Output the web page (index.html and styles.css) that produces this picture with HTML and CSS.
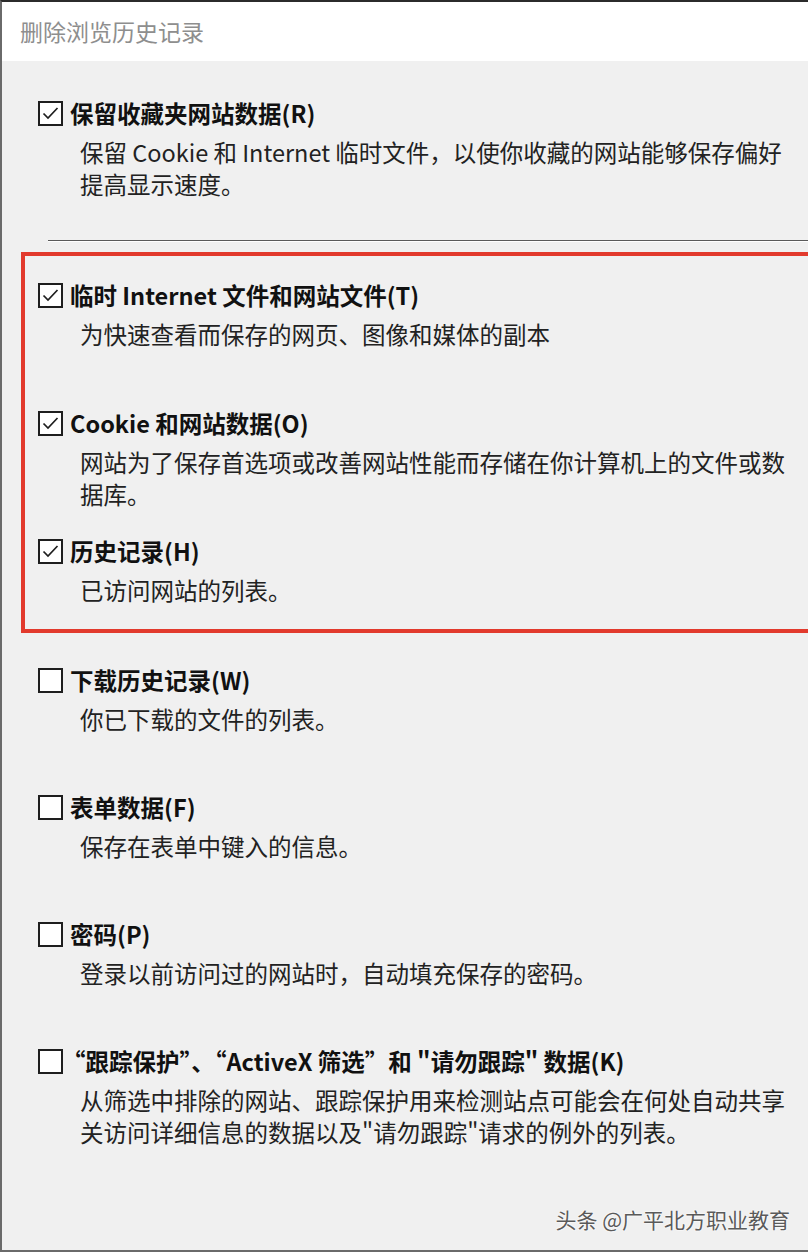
FILE: index.html
```html
<!DOCTYPE html>
<html lang="zh-CN">
<head>
    <meta charset="UTF-8">
    <meta name="viewport" content="width=device-width, initial-scale=1.0">
    <link rel="stylesheet" href="styles.css">
    <title>删除浏览历史记录</title>
</head>
<body>
<div class="dialog">
    <div class="dialog-title">删除浏览历史记录</div>

    <div class="dialog-body">
        <!-- keep favorites -->
        <div class="option option-top">
            <div class="option-head">
                <span class="check checked"><svg viewBox="0 0 21 21"><polyline points="3.5,10.5 8,15 17.5,5"/></svg></span>
                <span class="option-name">保留收藏夹网站数据(R)</span>
            </div>
            <div class="option-desc">保留 Cookie 和 Internet 临时文件，以使你收藏的网站能够保存偏好<br>提高显示速度。</div>
        </div>

        <div class="divider"></div>

        <!-- the ones that get cleared -->
        <div class="highlight">
            <div class="option">
                <div class="option-head">
                    <span class="check checked"><svg viewBox="0 0 21 21"><polyline points="3.5,10.5 8,15 17.5,5"/></svg></span>
                    <span class="option-name">临时 Internet 文件和网站文件(T)</span>
                </div>
                <div class="option-desc">为快速查看而保存的网页、图像和媒体的副本</div>
            </div>
            <div class="option">
                <div class="option-head">
                    <span class="check checked"><svg viewBox="0 0 21 21"><polyline points="3.5,10.5 8,15 17.5,5"/></svg></span>
                    <span class="option-name">Cookie 和网站数据(O)</span>
                </div>
                <div class="option-desc">网站为了保存首选项或改善网站性能而存储在你计算机上的文件或数<br>据库。</div>
            </div>
            <div class="option">
                <div class="option-head">
                    <span class="check checked"><svg viewBox="0 0 21 21"><polyline points="3.5,10.5 8,15 17.5,5"/></svg></span>
                    <span class="option-name">历史记录(H)</span>
                </div>
                <div class="option-desc">已访问网站的列表。</div>
            </div>
        </div>

        <div class="rest">
            <div class="option">
                <div class="option-head">
                    <span class="check"></span>
                    <span class="option-name">下载历史记录(W)</span>
                </div>
                <div class="option-desc">你已下载的文件的列表。</div>
            </div>
            <div class="option">
                <div class="option-head">
                    <span class="check"></span>
                    <span class="option-name">表单数据(F)</span>
                </div>
                <div class="option-desc">保存在表单中键入的信息。</div>
            </div>
            <div class="option">
                <div class="option-head">
                    <span class="check"></span>
                    <span class="option-name">密码(P)</span>
                </div>
                <div class="option-desc">登录以前访问过的网站时，自动填充保存的密码。</div>
            </div>
            <div class="option">
                <div class="option-head">
                    <span class="check"></span>
                    <span class="option-name"><span class="lead-quote">“</span>跟踪保护”、“ActiveX 筛选”和 "请勿跟踪" 数据(K)</span>
                </div>
                <div class="option-desc">从筛选中排除的网站、跟踪保护用来检测站点可能会在何处自动共享<br>关访问详细信息的数据以及"请勿跟踪"请求的例外的列表。</div>
            </div>
        </div>
    </div>

    <div class="watermark">头条 @广平北方职业教育</div>
</div>
</body>
</html>
```

FILE: styles.css
```css
body {
    margin: 0;
    padding: 0;
    background-color: #f0f0f0;
    font-family: "Noto Sans CJK SC", "Noto Sans", sans-serif;
    overflow: hidden;
}

.dialog {
    position: relative;
    width: 808px;
    height: 1252px;
    box-sizing: border-box;
    border-top: 2px solid #2b2b2b;
    border-left: 2px solid #6a6a6a;
    border-bottom: 2px solid #6a6a6a;
    background-color: #f0f0f0;
    overflow: hidden;
}

.dialog-title {
    height: 59px;
    background-color: #fff;
    padding-left: 18px;
    font-size: 23px;
    line-height: 58px;
    color: #8e8e8e;
}

.dialog-body {
    padding: 39px 0 0 36px;
}

.option {
    height: 128px;
    box-sizing: border-box;
}

.option-top {
    height: auto;
}

.option-head {
    display: flex;
    align-items: center;
    height: 26px;
}

.check {
    flex: none;
    width: 21px;
    height: 21px;
    border: 2px solid #1e1e1e;
    background-color: #fff;
    display: flex;
}

.check svg {
    width: 21px;
    height: 21px;
    fill: none;
    stroke: #1e1e1e;
    stroke-width: 1.7;
}

.option-name {
    margin-left: 7px;
    font-size: 23.5px;
    font-weight: bold;
    color: #111;
    white-space: nowrap;
    line-height: 26px;
}

.lead-quote {
    margin-left: -8px;
}

.option-desc {
    margin: 10px 0 0 42px;
    font-size: 23.5px;
    line-height: 32px;
    color: #222;
    white-space: nowrap;
}

.divider {
    margin: 40px 0 0 10px;
    height: 1px;
    background-color: #5a5a5a;
    border-bottom: 1px solid #fff;
}

/* red frame around the selected entries */
.highlight {
    margin: 10px -40px 0 -17px;
    padding: 26px 0 23px 13px;
    border: 4px solid #e23a2d;
}

.highlight .option:last-child {
    height: auto;
}

.rest {
    margin-top: 34px;
}

.rest .option {
    height: 127px;
}

.watermark {
    position: absolute;
    right: 18px;
    bottom: 16px;
    font-size: 21px;
    color: #5a5a5a;
    text-shadow: 0 0 2px #fff, 0 0 2px #fff;
}
```
